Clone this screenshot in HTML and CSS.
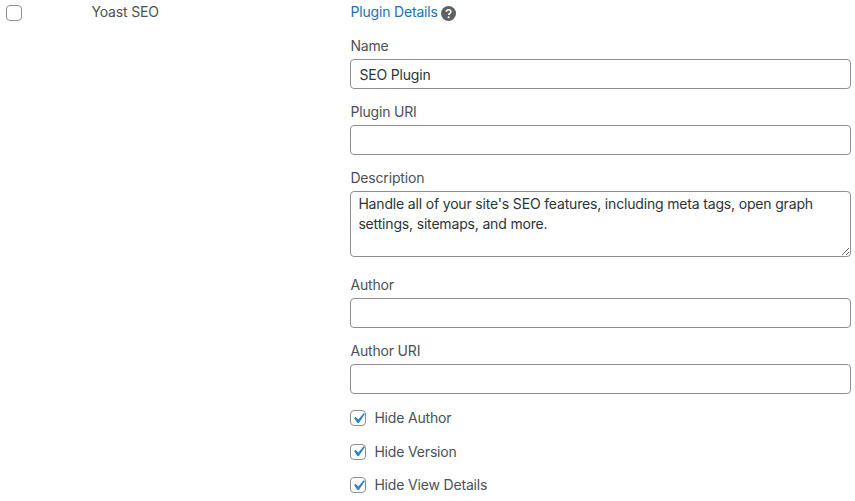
FILE: index.html
```html
<!DOCTYPE html>
<html lang="en">
<head>
<meta charset="utf-8">
<title>Plugin Details</title>
<link rel="stylesheet" href="styles.css">
</head>
<body>
<div class="row">
  <div class="select-col"><input type="checkbox" class="box" aria-label="Select Yoast SEO"></div>
  <div class="name-col">Yoast SEO</div>
  <div class="details-col">
    <div class="details-head">
      <a href="#" class="details-link">Plugin Details</a>
      <svg class="help" viewBox="0 0 14 14" width="15" height="15" aria-hidden="true"><circle cx="7" cy="7" r="7" fill="#5c6166"/><path d="M4.900 5.400c.1-1.200 1-1.900 2.200-1.900s2.100.7 2.100 1.800c0 .9-.5 1.300-1.100 1.700-.5.3-.7.6-.7 1.100v.2" fill="none" stroke="#fff" stroke-width="1.500"/><circle cx="7.100" cy="10.400" r=".95" fill="#fff"/></svg>
    </div>
    <div class="field"><label>Name</label><input type="text" class="text" value="SEO Plugin"></div>
    <div class="field"><label>Plugin URI</label><input type="text" class="text"></div>
    <div class="field desc"><label>Description</label><textarea class="area">Handle all of your site's SEO features, including meta tags, open graph settings, sitemaps, and more.</textarea></div>
    <div class="field"><label>Author</label><input type="text" class="text"></div>
    <div class="field"><label>Author URI</label><input type="text" class="text"></div>
    <label class="check"><input type="checkbox" class="box" checked><svg class="tick" viewBox="0 0 20 20" width="21" height="21" aria-hidden="true"><path d="M14.830 4.890l1.340.94-5.810 8.380H9.020L5.780 9.670l1.340-1.250 2.770 2.580z"/></svg>Hide Author</label>
    <label class="check"><input type="checkbox" class="box" checked><svg class="tick" viewBox="0 0 20 20" width="21" height="21" aria-hidden="true"><path d="M14.830 4.890l1.340.94-5.810 8.380H9.020L5.780 9.670l1.340-1.250 2.770 2.580z"/></svg>Hide Version</label>
    <label class="check"><input type="checkbox" class="box" checked><svg class="tick" viewBox="0 0 20 20" width="21" height="21" aria-hidden="true"><path d="M14.830 4.890l1.340.94-5.810 8.380H9.020L5.780 9.670l1.340-1.250 2.770 2.580z"/></svg>Hide View Details</label>
  </div>
</div>
</body>
</html>
```
FILE: styles.css
```css
* { box-sizing: border-box; }
html, body { height: 100%; }
body {
  margin: 0;
  background: #fff;
  color: #4a5158;
  font-family: Inter, "Liberation Sans", sans-serif;
  font-size: 14px;
  line-height: 20px;
  letter-spacing: -0.17px;
  overflow: hidden;
}
.row { display: flex; padding: 2px 4px 0 6px; }
.select-col { width: 85.500px; flex: none; padding-top: 3px; }
.name-col { width: 258.900px; flex: none; }
.details-col { flex: 1; min-width: 0; }
.details-head { display: flex; align-items: center; gap: 3px; height: 20px; }
.details-link { color: #2271b1; text-decoration: none; }
.help { display: block; margin-top: 2px; }
.field { margin-top: 14px; }
.field label { display: block; margin-bottom: 3px; }
.field + .field { margin-top: 13px; }
.text, .area {
  display: block;
  width: 100%;
  border: 1px solid #8c8f94;
  border-radius: 4px;
  background: #fff;
  color: #2c3338;
  font: inherit;
  letter-spacing: inherit;
  padding: 0 8px;
  margin: 0;
  outline: 0;
}
.text { height: 30px; }
.area { height: 66px; padding: 2px 7px; resize: vertical; }
.field.desc + .field { margin-top: 18px; }
.box {
  appearance: none;
  display: block;
  width: 16px;
  height: 16px;
  margin: 0;
  border: 1px solid #8c8f94;
  border-radius: 4px;
  background: #fff;
  flex: none;
}
.check { display: flex; align-items: center; gap: 8px; position: relative; height: 20px; margin-top: 13.500px; }
.field + .check { margin-top: 14px; }
.tick {
  position: absolute;
  left: -2.500px;
  top: -0.500px;
  fill: #3582c4;
}
```
